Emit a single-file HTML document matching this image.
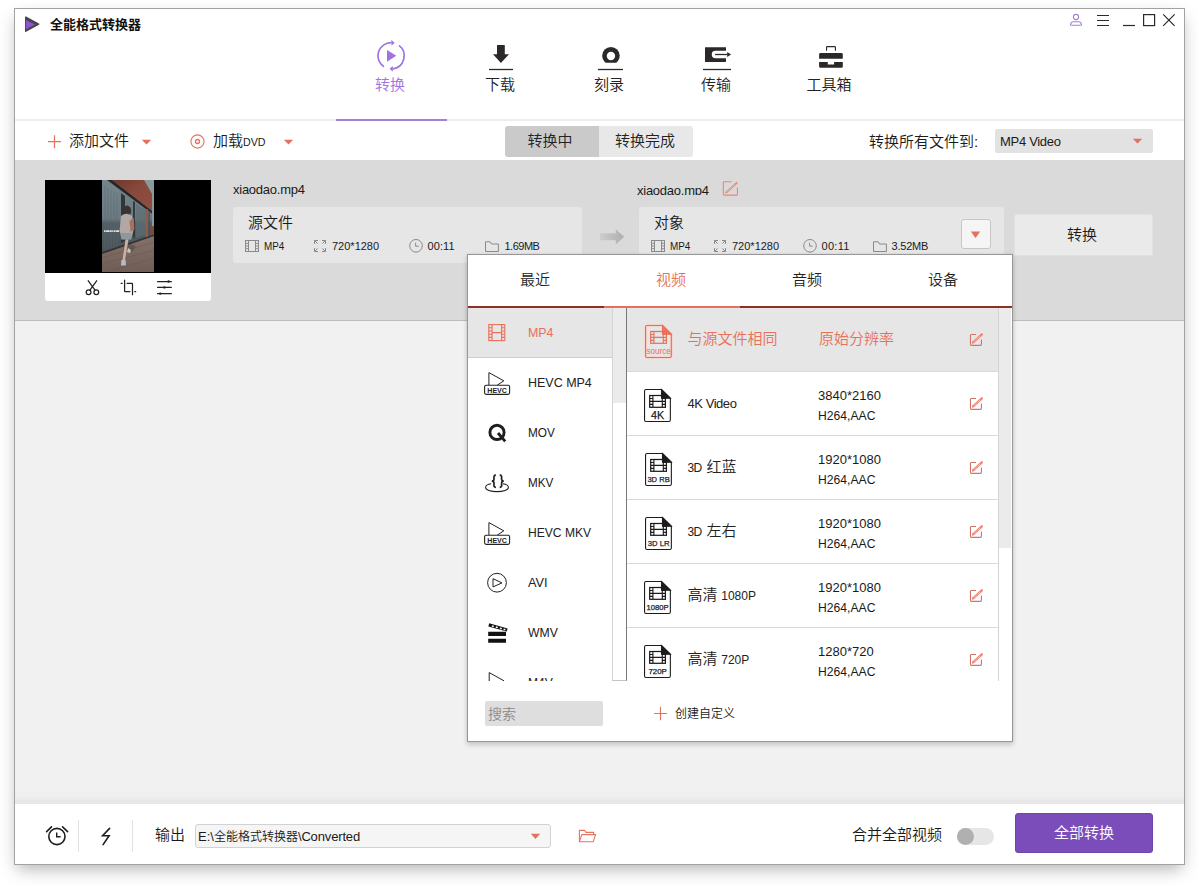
<!DOCTYPE html>
<html lang="zh-CN">
<head>
<meta charset="utf-8">
<title>全能格式转换器</title>
<style>
*{box-sizing:border-box;margin:0;padding:0}
html,body{width:1199px;height:888px;overflow:hidden;background:#fff}
body{font-family:"Liberation Sans","Noto Sans CJK SC",sans-serif;font-weight:350;color:#1a1a1a;position:relative;font-size:13px}
svg{position:absolute;overflow:visible}
#win{position:absolute;left:14px;top:8px;width:1171px;height:857px;background:#fff;border:1px solid #a2a2a2;box-shadow:0 7px 16px -3px rgba(0,0,0,.3)}
.t{position:absolute;white-space:nowrap;line-height:1}
#title{left:50px;top:18px;font-size:13px;font-weight:bold;color:#111}
.nav{position:absolute;top:77px;font-size:15px;color:#222;text-align:center;width:80px;line-height:15px}
#navline{position:absolute;left:15px;top:119px;width:1169px;height:2px;background:#eeecf3}
#navact{position:absolute;left:336px;top:119px;width:111px;height:2px;background:#a67fdc}
#filerow{position:absolute;left:15px;top:160px;width:1169px;height:161px;background:#dadada;border-bottom:1px solid #bcbcbc}
#empty{position:absolute;left:15px;top:321px;width:1169px;height:483px;background:#f1f1f1}
#bottom{position:absolute;left:15px;top:804px;width:1169px;height:60px;background:#fff}
.seg{position:absolute;top:126px;height:31px;font-size:15px;line-height:30px;text-align:center;color:#222}
.f15{font-size:15px}.f11{font-size:11px}.f13{font-size:13px}.f12{font-size:12px}.f14{font-size:14px}
.or{color:#e8705a}
.la{font-size:13px}.lb{font-size:12px}#rn2 .lb,#rn3 .lb{letter-spacing:-0.6px}
.box{position:absolute;background:#e6e6e6;border-radius:3px}
</style>
</head>
<body>
<div id="win"></div>
<svg style="left:22px;top:14px" width="20" height="20" viewBox="0 0 20 20"><path d="M4.2 2.6 L17 9.6 Q18 10.2 17 10.8 L4.2 17.8 Q3 18.4 3 17 L3 3.4 Q3 2 4.2 2.6Z" fill="#48464c"/><path d="M3.9 6 L13 10.4 L3.9 15.2Z" fill="#8b55cf"/></svg>
<div id="title" class="t">全能格式转换器</div>
<svg style="left:1068px;top:12px" width="16" height="16" viewBox="0 0 16 16" fill="none" stroke="#a67fdc" stroke-width="1.1"><circle cx="8" cy="5" r="2.6"/><path d="M3.2 13.3 Q2.3 13.3 2.5 12.3 Q3 9.8 5.2 9.8 H10.8 Q13 9.8 13.5 12.3 Q13.7 13.3 12.8 13.3Z"/></svg>
<svg style="left:1096px;top:12px" width="80" height="16" viewBox="0 0 80 16" fill="none" stroke="#2a2a2a" stroke-width="1.2"><path d="M1 3.5H13M1 8.5H13M1 13.5H13"/><path d="M27 13.5H39"/><rect x="47.6" y="2.6" width="11" height="11"/><path d="M67.2 2.4 L78.6 13.8M78.6 2.4 L67.2 13.8"/></svg>

<div id="navline"></div><div id="navact"></div>
<svg style="left:370px;top:35px" width="42" height="42" viewBox="0 0 42 42" fill="none" stroke="#9f74e2" stroke-width="1.7"><path d="M13.92 31.79 A13.1 13.1 0 0 1 21.5 7.71"/><path d="M28.93 10.34 A13.1 13.1 0 0 1 22.65 33.8"/><path d="M21.3 5 L24.7 7.8 L21.5 10.7Z" fill="#9f74e2" stroke="none"/><path d="M22.8 31.1 L19.6 33.8 L22.8 36.8Z" fill="#9f74e2" stroke="none"/><path d="M17 15.1 L26.3 20.8 L17 26.7Z" fill="#9f74e2" stroke="none"/></svg>
<div class="nav" style="left:350px;color:#9f74e2">转换</div>
<svg style="left:480px;top:35px" width="42" height="42" viewBox="0 0 42 42"><path d="M17.4 9.9 H24.4 Q24.8 9.9 24.8 10.3 V19.2 H29 L20.95 27.9 L13 19.2 H17 V10.3 Q17 9.9 17.4 9.9Z" fill="#2b2829"/><path d="M9 34.5H33" stroke="#2b2829" stroke-width="1.3"/></svg>
<div class="nav" style="left:460px">下载</div>
<svg style="left:588px;top:35px" width="42" height="42" viewBox="0 0 42 42"><clipPath id="cpb"><rect x="10" y="10" width="26" height="17.8"/></clipPath><circle cx="22.94" cy="20.8" r="8.8" fill="#2b2829" clip-path="url(#cpb)"/><circle cx="22.94" cy="20.95" r="4.2" fill="#fff"/><path d="M9.9 34.5H35" stroke="#2b2829" stroke-width="1.3"/></svg>
<div class="nav" style="left:569px">刻录</div>
<svg style="left:695px;top:35px" width="42" height="42" viewBox="0 0 42 42"><path d="M10.4 12.2 H30.6 Q31 12.2 31 12.6 V15.85 H20.4 A3.66 3.66 0 0 0 20.4 23.18 H31 V26.5 Q31 26.9 30.6 26.9 H10.4 Q10 26.9 10 26.5 V12.6 Q10 12.2 10.4 12.2Z" fill="#2b2829"/><path d="M20.1 19.5 H32.6" stroke="#2b2829" stroke-width="1.3"/><path d="M32.2 17.1 L36.1 19.5 L32.2 21.9Z" fill="#2b2829"/><path d="M8 34.5H36.05" stroke="#2b2829" stroke-width="1.3"/></svg>
<div class="nav" style="left:676px">传输</div>
<svg style="left:809px;top:35px" width="42" height="42" viewBox="0 0 42 42"><path d="M17.55 15.85 V12.4 Q17.55 11.65 18.3 11.65 H25.7 Q26.45 11.65 26.45 12.4 V15.85" fill="none" stroke="#2b2829" stroke-width="1.1"/><path d="M11.5 18.1 H32.4 Q33.8 18.1 33.8 19.5 V23.8 H10.1 V19.5 Q10.1 18.1 11.5 18.1Z" fill="#2b2829"/><path d="M10.1 27.06 H18.8 V29.56 H25.07 V27.06 H33.8 V31.4 Q33.8 32.8 32.4 32.8 H11.5 Q10.1 32.8 10.1 31.4Z" fill="#2b2829"/></svg>
<div class="nav" style="left:789px">工具箱</div>

<svg style="left:47px;top:134px" width="16" height="16" viewBox="0 0 16 16" stroke="#e8705a" stroke-width="1.2"><path d="M7.5 1.2V14.2M1 7.7H14"/></svg>
<div class="t f15" style="left:69px;top:133px">添加文件</div>
<svg style="left:141px;top:139px" width="11" height="6" viewBox="0 0 11 6"><path d="M0.8 0.8H10.2L5.5 5.4Z" fill="#e8705a"/></svg>
<svg style="left:189px;top:133px" width="17" height="17" viewBox="0 0 17 17" fill="none" stroke="#e8705a" stroke-width="1.1"><circle cx="8.5" cy="8.5" r="6.6"/><circle cx="8.5" cy="8.5" r="2" stroke-width="1.3"/></svg>
<div class="t f15" style="left:213px;top:133px">加载<span id="dvd" style="font-size:11.5px;display:inline-block;transform-origin:0 100%;transform:scaleX(0.93)">DVD</span></div>
<svg style="left:283px;top:139px" width="11" height="6" viewBox="0 0 11 6"><path d="M0.8 0.8H10.2L5.5 5.4Z" fill="#e8705a"/></svg>
<div class="seg" style="left:505px;width:94px;background:#cacaca;border-radius:3px 0 0 3px;padding-right:4px">转换中</div>
<div class="seg" style="left:599px;width:94px;background:#e8e8e8;border-radius:0 3px 3px 0;padding-right:2px">转换完成</div>
<div class="t f15" style="left:869px;top:134px">转换所有文件到:</div>
<div style="position:absolute;left:995px;top:129px;width:158px;height:24px;background:#e2e2e2;border-radius:2px"></div>
<div class="t f13" id="mp4v" style="letter-spacing:-0.3px;left:1000px;top:135px">MP4 Video</div>
<svg style="left:1132px;top:138px" width="11" height="6" viewBox="0 0 11 6"><path d="M0.8 0.8H10.2L5.5 5.4Z" fill="#e8705a"/></svg>

<div id="filerow"></div>
<div id="empty"></div>
<div style="position:absolute;left:45px;top:180px;width:166px;height:121px;background:#fff;border-radius:0 0 3px 3px"></div>
<div style="position:absolute;left:45px;top:180px;width:166px;height:93px;background:#000"></div>
<svg style="left:102px;top:180px" width="52" height="92" viewBox="0 0 52 92">
<defs><linearGradient id="gl" x1="0" y1="0" x2="0" y2="1"><stop offset="0" stop-color="#74858b"/><stop offset="0.42" stop-color="#6a7a80"/><stop offset="0.47" stop-color="#525e63"/><stop offset="1" stop-color="#434d52"/></linearGradient>
<linearGradient id="fl" x1="0" y1="0" x2="0" y2="1"><stop offset="0" stop-color="#85726a"/><stop offset="1" stop-color="#6f5d56"/></linearGradient>
<linearGradient id="br" x1="0" y1="0" x2="1" y2="1"><stop offset="0" stop-color="#6e392e"/><stop offset="0.5" stop-color="#8a4a3b"/><stop offset="1" stop-color="#8f4f40"/></linearGradient></defs>
<rect width="52" height="92" fill="url(#gl)"/>
<path d="M3 6V74M6 8V73M9 10V72M12 12V71M15 14V70" stroke="#5c6b71" stroke-width="0.8" opacity="0.6"/>
<path d="M19 13 L23 16 V61 L19 63Z" fill="#2f373a"/><path d="M31 21 L33 22 V57 L31 58Z" fill="#333b3e"/>
<path d="M34 24 L43 30 V55 L34 58Z" fill="#5d6d73" opacity="0.7"/>
<path d="M42 0 H52 V48 H50 V14Z" fill="#8a999d"/>
<path d="M10 0 H42 L50 14 V31Z" fill="url(#br)"/>
<path d="M5 0 H10 L50 31 V33.5 Z" fill="#2a2523"/>
<rect x="43.2" y="29" width="2.8" height="28" fill="#95594b"/>
<rect x="46.4" y="32" width="1.4" height="24" fill="#4a5357"/>
<rect x="48" y="46" width="4" height="10" fill="#714d44"/>
<path d="M0 73.5 L52 55.5 V92 H0Z" fill="url(#fl)"/>
<path d="M0 78 L52 62M0 84 L52 70M4 92 L52 78" stroke="#64534c" stroke-width="0.5" opacity="0.7"/>
<path d="M0 72 L52 54.5 V56 L0 74Z" fill="#35302f"/>
<path d="M22 62 L34 66 L30 72 L21 70Z" fill="#4e443f" opacity="0.5"/>
<ellipse cx="25" cy="31" rx="4.2" ry="5.4" fill="#3a3230"/>
<path d="M19 36 Q24.5 31.5 30 36 L31.5 50 L29 59 H19.5 L17.6 50Z" fill="#b1a7a4"/>
<path d="M19.3 53 H29.4 V59.6 H19.3Z" fill="#8e979c"/>
<path d="M27.5 41 L31.8 37.6 L32.4 49 L28.6 52Z" fill="#a8705d"/>
<path d="M23.5 59.5 L26.5 59.5 L23 80 L20.5 80Z" fill="#c6b2a6"/>
<path d="M26 68 L29 70 L28 73 L25 72Z" fill="#c9c4c0"/>
<path d="M19.4 80 H23.6 L24 85.6 H19Z" fill="#babbbd"/>
<path d="M2 51.2H17.6" stroke="#dfe2e3" stroke-width="1.7" stroke-dasharray="1.6 0.5 3 0.4 2.2 0.5 1.2 0.6"/>
</svg>
<svg style="left:75px;top:270px" width="110" height="35" viewBox="0 0 110 35" fill="none" stroke="#222" stroke-width="1.25"><path d="M12.9 10.3 L20.2 20.3M22 10.3 L14.7 20.3"/><circle cx="13.6" cy="22.2" r="2.4"/><circle cx="21.3" cy="22.2" r="2.4"/>
<path d="M49.6 10.2V20.9Q49.6 21.5 50.2 21.5H54.9M52.1 13.45H56.9Q57.5 13.45 57.5 14.05V24.7" stroke-linecap="round"/><path d="M46.2 13.45H47.1M59.8 21.5H60.7" stroke-linecap="round"/>
<path d="M82.1 11.5H96.8M82.1 17.4H96.8M82.1 23.6H96.8"/><circle cx="93.6" cy="11.5" r="1.2" fill="#222" stroke="none"/><circle cx="89.4" cy="17.4" r="1.2" fill="#222" stroke="none"/><circle cx="85.3" cy="23.6" r="1.2" fill="#222" stroke="none"/></svg>
<div class="t f13" id="fn1" style="letter-spacing:-0.25px;left:233px;top:183px">xiaodao.mp4</div>
<div class="box" style="left:233px;top:207px;width:349px;height:56px"></div>
<div class="t f15" style="left:248px;top:215px">源文件</div>
<svg class="ic" style="left:245px;top:240px" width="14" height="12" viewBox="0 0 14 12" fill="none" stroke="#8a8a8a" stroke-width="1"><rect x="0.5" y="0.5" width="13" height="11"/><path d="M3.5 0.5V11.5M10.5 0.5V11.5M0.5 3.3H3.5M0.5 6H3.5M0.5 8.7H3.5M10.5 3.3H13.5M10.5 6H13.5M10.5 8.7H13.5"/></svg>
<div class="t f11" id="s1" style="transform-origin:0 0;transform:scaleX(0.9);left:263.5px;top:241px">MP4</div>
<svg class="ic" style="left:314px;top:240px" width="12" height="12" viewBox="0 0 12 12" fill="none" stroke="#8a8a8a" stroke-width="1"><path d="M0.5 4V0.5H4M8 0.5H11.5V4M11.5 8V11.5H8M4 11.5H0.5V8M0.8 0.8L3.6 3.6M11.2 0.8L8.4 3.6M11.2 11.2L8.4 8.4M0.8 11.2L3.6 8.4"/></svg>
<div class="t f11" id="s2" style="left:332px;top:241px">720*1280</div>
<svg class="ic" style="left:409px;top:239px" width="14" height="14" viewBox="0 0 14 14" fill="none" stroke="#8a8a8a" stroke-width="1"><circle cx="7" cy="6.8" r="6.3"/><path d="M6.6 3.6V7.2H9.8"/></svg>
<div class="t f11" id="s3" style="letter-spacing:0.1px;left:427.5px;top:241px">00:11</div>
<svg class="ic" style="left:485px;top:241px" width="14" height="11" viewBox="0 0 14 11" fill="none" stroke="#8a8a8a" stroke-width="1"><path d="M0.5 10.5V0.8H5.2L6.6 3H13.4V10.5Z"/></svg>
<div class="t f11" id="s4" style="letter-spacing:-0.5px;left:504.5px;top:241px">1.69MB</div>
<svg style="left:598px;top:227px" width="28" height="20" viewBox="0 0 28 20"><defs><linearGradient id="ag" x1="0" y1="0" x2="1" y2="0"><stop offset="0" stop-color="#cecece"/><stop offset="1" stop-color="#aeaeae"/></linearGradient></defs><path d="M2 6.3H17.8V2.2L26.2 9.8L17.8 17.6V13.3H2Z" fill="url(#ag)"/></svg>
<div style="position:absolute;left:636px;top:180px;width:80px;height:15px;overflow:hidden"><div class="t f13" id="fn2" style="letter-spacing:-0.25px;left:1px;top:3.5px">xiaodao.mp4</div></div>
<svg style="left:722px;top:180px" width="17" height="17" viewBox="0 0 17 17" fill="none" stroke="#ee8674" stroke-width="1.1"><path d="M9.6 1.75H2.35Q1.35 1.75 1.35 2.75V14.15Q1.35 15.15 2.35 15.15H14.45Q15.45 15.15 15.45 14.15V7.4"/><path d="M4.2 12.4L14.6 2.9" stroke-width="2" stroke-linecap="round"/><path d="M4.6 12L13 4.4" stroke="#dcdcdc" stroke-width="0.6"/></svg>
<div class="box" style="left:639px;top:207px;width:365px;height:56px"></div>
<div class="t f15" style="left:654px;top:215px">对象</div>
<svg class="ic" style="left:651px;top:240px" width="14" height="12" viewBox="0 0 14 12" fill="none" stroke="#8a8a8a" stroke-width="1"><rect x="0.5" y="0.5" width="13" height="11"/><path d="M3.5 0.5V11.5M10.5 0.5V11.5M0.5 3.3H3.5M0.5 6H3.5M0.5 8.7H3.5M10.5 3.3H13.5M10.5 6H13.5M10.5 8.7H13.5"/></svg>
<div class="t f11" id="d1" style="transform-origin:0 0;transform:scaleX(0.9);left:669.5px;top:241px">MP4</div>
<svg class="ic" style="left:714px;top:240px" width="12" height="12" viewBox="0 0 12 12" fill="none" stroke="#8a8a8a" stroke-width="1"><path d="M0.5 4V0.5H4M8 0.5H11.5V4M11.5 8V11.5H8M4 11.5H0.5V8M0.8 0.8L3.6 3.6M11.2 0.8L8.4 3.6M11.2 11.2L8.4 8.4M0.8 11.2L3.6 8.4"/></svg>
<div class="t f11" id="d2" style="left:732px;top:241px">720*1280</div>
<svg class="ic" style="left:803px;top:239px" width="14" height="14" viewBox="0 0 14 14" fill="none" stroke="#8a8a8a" stroke-width="1"><circle cx="7" cy="6.8" r="6.3"/><path d="M6.6 3.6V7.2H9.8"/></svg>
<div class="t f11" id="d3" style="letter-spacing:0.3px;left:821.5px;top:241px">00:11</div>
<svg class="ic" style="left:873px;top:241px" width="14" height="11" viewBox="0 0 14 11" fill="none" stroke="#8a8a8a" stroke-width="1"><path d="M0.5 10.5V0.8H5.2L6.6 3H13.4V10.5Z"/></svg>
<div class="t f11" id="d4" style="letter-spacing:-0.2px;left:891.5px;top:241px">3.52MB</div>
<div style="position:absolute;left:961px;top:219px;width:30px;height:30px;background:#f5f5f5;border:1px solid #c6c6c6;border-radius:3px"></div>
<svg style="left:970px;top:231px" width="11" height="8" viewBox="0 0 11 8"><path d="M0.8 0.6H10.2L5.5 7Z" fill="#e8705a"/></svg>
<div style="position:absolute;left:1014px;top:214px;width:139px;height:42px;background:#eaeaea;border:1px solid #e1e1e1;border-radius:2px;font-size:15px;line-height:39px;text-align:center;padding-right:3px">转换</div>

<div id="pop" style="position:absolute;left:467px;top:254px;width:546px;height:488px;background:#fff;border:1px solid #979797;box-shadow:0 3px 5px rgba(0,0,0,.17),0 0 3px rgba(0,0,0,.08)"></div>
<div class="t f15" style="left:495px;top:272px;width:80px;text-align:center;color:#222">最近</div>
<div class="t f15" style="left:631px;top:272px;width:80px;text-align:center;color:#e8705a">视频</div>
<div class="t f15" style="left:767px;top:272px;width:80px;text-align:center;color:#222">音频</div>
<div class="t f15" style="left:903px;top:272px;width:80px;text-align:center;color:#222">设备</div>
<div style="position:absolute;left:468px;top:306px;width:544px;height:2px;background:#8e3024"></div>
<div style="position:absolute;left:604px;top:306px;width:136px;height:2px;background:#e2715d"></div>
<div id="ll" style="position:absolute;left:468px;top:308px;width:144px;height:373px;overflow:hidden;background:#fff">
<div style="position:absolute;left:0;top:0;width:144px;height:50px;background:#e6e6e6;border-bottom:1px solid #cfcfcf"></div>
<div class="t f13 ln" id="ln0" style="left:59.5px;top:18px;color:#e8705a;transform-origin:0 0;transform:scaleX(0.955)">MP4</div>
<div class="t f13 ln" id="ln1" style="left:59.5px;top:68px;color:#222;transform-origin:0 0;transform:scaleX(0.96)">HEVC MP4</div>
<div class="t f13 ln" id="ln2" style="left:59.5px;top:118px;color:#222;transform-origin:0 0;transform:scaleX(0.91)">MOV</div>
<div class="t f13 ln" id="ln3" style="left:59.5px;top:168px;color:#222;transform-origin:0 0;transform:scaleX(0.9)">MKV</div>
<div class="t f13 ln" id="ln4" style="left:59.5px;top:218px;color:#222;transform-origin:0 0;transform:scaleX(0.93)">HEVC MKV</div>
<div class="t f13 ln" id="ln5" style="left:59.5px;top:268px;color:#222;transform-origin:0 0;transform:scaleX(0.98)">AVI</div>
<div class="t f13 ln" id="ln6" style="left:59.5px;top:318px;color:#222;transform-origin:0 0;transform:scaleX(0.94)">WMV</div>
<div class="t f13 ln" id="ln7" style="left:59.5px;top:368px;color:#222;transform-origin:0 0;transform:scaleX(0.93)">M4V</div>
<svg style="left:20px;top:16px" width="18" height="18" viewBox="0 0 18 18" fill="none" stroke="#e8705a" stroke-width="1.1"><rect x="0.8" y="0.6" width="16" height="16"/><path d="M4 0.6V16.6M13.6 0.6V16.6M4 8.6H13.6M0.8 3.8H4M0.8 7H4M0.8 10.2H4M0.8 13.4H4M13.6 3.8H16.8M13.6 7H16.8M13.6 10.2H16.8M13.6 13.4H16.8"/></svg>
<svg style="left:15px;top:62px" width="28" height="26" viewBox="0 0 28 26" fill="none" stroke="#222" stroke-width="1"><path d="M5.9 15.2V2.6L20.8 10.8L14.2 15.2"/><rect x="1.6" y="15.2" width="25" height="9.2" rx="1.6" fill="#fff" stroke-width="1.1"/><text x="14.1" y="22.6" font-family="Liberation Sans,sans-serif" font-weight="bold" font-size="7.2" text-anchor="middle" fill="#222" stroke="none" textLength="19.6" lengthAdjust="spacingAndGlyphs">HEVC</text></svg>
<svg style="left:18px;top:114px" width="22" height="22" viewBox="0 0 22 22" fill="none" stroke="#1e1e1e"><circle cx="11" cy="10.4" r="7.1" stroke-width="2.9"/><path d="M12 11L19.2 19.4" stroke-width="2.8"/></svg>
<svg style="left:15px;top:164px" width="28" height="24" viewBox="0 0 28 24" fill="none" stroke="#222"><path d="M8.2 11.8 C3.4 12.4 2.6 14.2 2.6 15.5 C2.6 17.9 7.6 19.6 14 19.6 C20.4 19.6 25.4 17.9 25.4 15.5 C25.4 14.2 24.6 12.4 19.8 11.8" stroke-width="1.05"/><path d="M12.9 3.1 C10.4 3.1 11 5.2 11 7 C11 8.6 9.8 9.2 8.8 9.2 C9.8 9.2 11 9.8 11 11.4 C11 13.2 10.4 15.3 12.9 15.3M16.7 3.1 C19.2 3.1 18.6 5.2 18.6 7 C18.6 8.6 19.8 9.2 20.8 9.2 C19.8 9.2 18.6 9.8 18.6 11.4 C18.6 13.2 19.2 15.3 16.7 15.3" stroke-width="1.7"/></svg>
<svg style="left:15px;top:212px" width="28" height="26" viewBox="0 0 28 26" fill="none" stroke="#222" stroke-width="1"><path d="M5.9 15.2V2.6L20.8 10.8L14.2 15.2"/><rect x="1.6" y="15.2" width="25" height="9.2" rx="1.6" fill="#fff" stroke-width="1.1"/><text x="14.1" y="22.6" font-family="Liberation Sans,sans-serif" font-weight="bold" font-size="7.2" text-anchor="middle" fill="#222" stroke="none" textLength="19.6" lengthAdjust="spacingAndGlyphs">HEVC</text></svg>
<svg style="left:18px;top:264px" width="22" height="22" viewBox="0 0 22 22" fill="none" stroke="#222" stroke-width="1"><circle cx="11" cy="10.7" r="9.4"/><path d="M7 6.7V14.9L16 10.9Z"/></svg>
<svg style="left:18px;top:312px" width="24" height="24" viewBox="0 0 24 24"><path d="M2.2 11.7H20V15.9H2.2Z M2.2 18.8H20V22.7H2.2Z" fill="#111"/><path d="M3.2 3.2L21.6 8.4L20.8 11.6L2.4 6.4Z" fill="#111"/><path d="M6 5.2L8 5.8L7.6 7.2L5.6 6.6ZM10 6.3L12 6.9L11.6 8.3L9.6 7.7ZM14 7.4L16 8L15.6 9.4L13.6 8.8ZM17.8 8.5L19.6 9L19.2 10.4L17.4 9.9Z" fill="#fff"/></svg>
<svg style="left:15px;top:362px" width="28" height="26" viewBox="0 0 28 26" fill="none" stroke="#222" stroke-width="1"><path d="M6.2 15.2V2.6L21 10.8L14.2 15.2"/></svg>
</div>
<div style="position:absolute;left:612px;top:308px;width:15px;height:373px;background:#fff;border-left:1px solid #d4d4d4;border-bottom:1px solid #c4c4c4;border-right:1px solid #777"></div>
<div style="position:absolute;left:613px;top:308px;width:13px;height:95px;background:#ebebeb"></div>
<div id="rl" style="position:absolute;left:627px;top:308px;width:371px;height:373px;overflow:hidden;background:#fff">
<div style="position:absolute;left:0;top:0;width:371px;height:64px;background:#e6e6e6"></div>
<div style="position:absolute;left:0;top:63px;width:371px;height:1px;background:#d9d9d9"></div>
<svg style="left:16px;top:14px" width="31" height="37" viewBox="0 0 31 37" fill="none" stroke="#e8705a" stroke-width="1.1"><path d="M4 3.55H19.5L28.35 12.3V34Q28.35 35.45 26.9 35.45H4Q2.55 35.45 2.55 34V5Q2.55 3.55 4 3.55Z" stroke="#f9cfc6" stroke-width="2.5"/><path d="M4 3.55H19.5L28.35 12.3V34Q28.35 35.45 26.9 35.45H4Q2.55 35.45 2.55 34V5Q2.55 3.55 4 3.55Z"/><path d="M19.5 3.55L28.35 12.3H19.5Z" fill="#ef7761"/><rect x="7.7" y="9.5" width="15.7" height="11.8" stroke-width="1.2"/><path d="M10.9 9.5V21.3M20.3 9.5V21.3M10.9 15.4H20.3M7.7 12.45H10.9M7.7 15.4H10.9M7.7 18.35H10.9M20.3 12.45H23.4M20.3 15.4H23.4M20.3 18.35H23.4" stroke-width="1.1"/><text x="15.6" y="31.9" font-family="Liberation Sans,sans-serif" font-size="9" text-anchor="middle" fill="#e8705a" stroke="none" textLength="24.4" lengthAdjust="spacingAndGlyphs">source</text></svg>
<div class="t f15 rn" id="rn0" style="left:60.5px;top:23px;color:#e8705a;word-spacing:0.4px;">与源文件相同</div>
<div class="t f15" id="rr0" style="left:192px;top:23px;color:#e8705a">原始分辨率</div>
<svg style="left:341px;top:24px" width="17" height="17" viewBox="0 0 17 17" fill="none" stroke="#cf766a" stroke-width="1.1"><path d="M8.1 2.45H3.45Q2.45 2.45 2.45 3.45V12.35Q2.45 13.35 3.45 13.35H12.45Q13.45 13.35 13.45 12.35V7.5"/><path d="M5.4 10.2L13.9 2.3" stroke="#ee8674" stroke-width="2.3" stroke-linecap="round"/><path d="M3.9 11.5L4.5 9.2L6.3 11Z" fill="#e8705a" stroke="none"/><path d="M5.6 10L11.6 4.4" stroke="#fff" stroke-width="0.8" stroke-dasharray="0.8 0.7"/></svg>
<div style="position:absolute;left:0;top:127px;width:371px;height:1px;background:#d9d9d9"></div>
<svg style="left:15px;top:78px" width="31" height="37" viewBox="0 0 31 37" fill="none" stroke="#1c1c1c" stroke-width="1.1"><path d="M4 3.55H19.5L28.35 12.3V34Q28.35 35.45 26.9 35.45H4Q2.55 35.45 2.55 34V5Q2.55 3.55 4 3.55Z" fill="#fff"/><path d="M19.5 3.55L28.35 12.3H19.5Z" fill="#1c1c1c"/><rect x="7.7" y="9.5" width="15.7" height="11.8" stroke-width="1.25"/><path d="M10.9 9.5V21.3M20.3 9.5V21.3M10.9 15.4H20.3M7.7 12.45H10.9M7.7 15.4H10.9M7.7 18.35H10.9M20.3 12.45H23.4M20.3 15.4H23.4M20.3 18.35H23.4" stroke-width="1.15"/><text x="15.6" y="32.8" font-family="Liberation Sans,sans-serif" font-size="10.5" text-anchor="middle" fill="#1c1c1c" stroke="#1c1c1c" stroke-width="0.25" textLength="13.2" lengthAdjust="spacingAndGlyphs">4K</text></svg>
<div class="t f15 rn" id="rn1" style="left:60.5px;top:87px;color:#222;letter-spacing:-0.45px;"><span class="la">4K Video</span></div>
<div class="t f13 la2" id="ra1" style="left:191px;top:81px">3840*2160</div>
<div class="t f13 la2" id="rb1" style="left:191px;top:101px;transform-origin:0 0;transform:scaleX(0.935)">H264,AAC</div>
<svg style="left:341px;top:88px" width="17" height="17" viewBox="0 0 17 17" fill="none" stroke="#cf766a" stroke-width="1.1"><path d="M8.1 2.45H3.45Q2.45 2.45 2.45 3.45V12.35Q2.45 13.35 3.45 13.35H12.45Q13.45 13.35 13.45 12.35V7.5"/><path d="M5.4 10.2L13.9 2.3" stroke="#ee8674" stroke-width="2.3" stroke-linecap="round"/><path d="M3.9 11.5L4.5 9.2L6.3 11Z" fill="#e8705a" stroke="none"/><path d="M5.6 10L11.6 4.4" stroke="#fff" stroke-width="0.8" stroke-dasharray="0.8 0.7"/></svg>
<div style="position:absolute;left:0;top:191px;width:371px;height:1px;background:#d9d9d9"></div>
<svg style="left:16px;top:142px" width="31" height="37" viewBox="0 0 31 37" fill="none" stroke="#1c1c1c" stroke-width="1.1"><path d="M4 3.55H19.5L28.35 12.3V34Q28.35 35.45 26.9 35.45H4Q2.55 35.45 2.55 34V5Q2.55 3.55 4 3.55Z" fill="#fff"/><path d="M19.5 3.55L28.35 12.3H19.5Z" fill="#1c1c1c"/><rect x="7.7" y="9.5" width="15.7" height="11.8" stroke-width="1.25"/><path d="M10.9 9.5V21.3M20.3 9.5V21.3M10.9 15.4H20.3M7.7 12.45H10.9M7.7 15.4H10.9M7.7 18.35H10.9M20.3 12.45H23.4M20.3 15.4H23.4M20.3 18.35H23.4" stroke-width="1.15"/><text x="15.6" y="31.7" font-family="Liberation Sans,sans-serif" font-size="7.8" text-anchor="middle" fill="#1c1c1c" stroke="#1c1c1c" stroke-width="0.25" textLength="22.4" lengthAdjust="spacingAndGlyphs">3D RB</text></svg>
<div class="t f15 rn" id="rn2" style="left:60.5px;top:151px;color:#222;word-spacing:0.6px;"><span class="lb">3D</span> 红蓝</div>
<div class="t f13 la2" id="ra2" style="left:191px;top:145px">1920*1080</div>
<div class="t f13 la2" id="rb2" style="left:191px;top:165px;transform-origin:0 0;transform:scaleX(0.935)">H264,AAC</div>
<svg style="left:341px;top:152px" width="17" height="17" viewBox="0 0 17 17" fill="none" stroke="#cf766a" stroke-width="1.1"><path d="M8.1 2.45H3.45Q2.45 2.45 2.45 3.45V12.35Q2.45 13.35 3.45 13.35H12.45Q13.45 13.35 13.45 12.35V7.5"/><path d="M5.4 10.2L13.9 2.3" stroke="#ee8674" stroke-width="2.3" stroke-linecap="round"/><path d="M3.9 11.5L4.5 9.2L6.3 11Z" fill="#e8705a" stroke="none"/><path d="M5.6 10L11.6 4.4" stroke="#fff" stroke-width="0.8" stroke-dasharray="0.8 0.7"/></svg>
<div style="position:absolute;left:0;top:255px;width:371px;height:1px;background:#d9d9d9"></div>
<svg style="left:16px;top:206px" width="31" height="37" viewBox="0 0 31 37" fill="none" stroke="#1c1c1c" stroke-width="1.1"><path d="M4 3.55H19.5L28.35 12.3V34Q28.35 35.45 26.9 35.45H4Q2.55 35.45 2.55 34V5Q2.55 3.55 4 3.55Z" fill="#fff"/><path d="M19.5 3.55L28.35 12.3H19.5Z" fill="#1c1c1c"/><rect x="7.7" y="9.5" width="15.7" height="11.8" stroke-width="1.25"/><path d="M10.9 9.5V21.3M20.3 9.5V21.3M10.9 15.4H20.3M7.7 12.45H10.9M7.7 15.4H10.9M7.7 18.35H10.9M20.3 12.45H23.4M20.3 15.4H23.4M20.3 18.35H23.4" stroke-width="1.15"/><text x="15.6" y="31.7" font-family="Liberation Sans,sans-serif" font-size="7.8" text-anchor="middle" fill="#1c1c1c" stroke="#1c1c1c" stroke-width="0.25" textLength="21.8" lengthAdjust="spacingAndGlyphs">3D LR</text></svg>
<div class="t f15 rn" id="rn3" style="left:60.5px;top:215px;color:#222;word-spacing:0.6px;"><span class="lb">3D</span> 左右</div>
<div class="t f13 la2" id="ra3" style="left:191px;top:209px">1920*1080</div>
<div class="t f13 la2" id="rb3" style="left:191px;top:229px;transform-origin:0 0;transform:scaleX(0.935)">H264,AAC</div>
<svg style="left:341px;top:216px" width="17" height="17" viewBox="0 0 17 17" fill="none" stroke="#cf766a" stroke-width="1.1"><path d="M8.1 2.45H3.45Q2.45 2.45 2.45 3.45V12.35Q2.45 13.35 3.45 13.35H12.45Q13.45 13.35 13.45 12.35V7.5"/><path d="M5.4 10.2L13.9 2.3" stroke="#ee8674" stroke-width="2.3" stroke-linecap="round"/><path d="M3.9 11.5L4.5 9.2L6.3 11Z" fill="#e8705a" stroke="none"/><path d="M5.6 10L11.6 4.4" stroke="#fff" stroke-width="0.8" stroke-dasharray="0.8 0.7"/></svg>
<div style="position:absolute;left:0;top:319px;width:371px;height:1px;background:#d9d9d9"></div>
<svg style="left:15px;top:270px" width="31" height="37" viewBox="0 0 31 37" fill="none" stroke="#1c1c1c" stroke-width="1.1"><path d="M4 3.55H19.5L28.35 12.3V34Q28.35 35.45 26.9 35.45H4Q2.55 35.45 2.55 34V5Q2.55 3.55 4 3.55Z" fill="#fff"/><path d="M19.5 3.55L28.35 12.3H19.5Z" fill="#1c1c1c"/><rect x="7.7" y="9.5" width="15.7" height="11.8" stroke-width="1.25"/><path d="M10.9 9.5V21.3M20.3 9.5V21.3M10.9 15.4H20.3M7.7 12.45H10.9M7.7 15.4H10.9M7.7 18.35H10.9M20.3 12.45H23.4M20.3 15.4H23.4M20.3 18.35H23.4" stroke-width="1.15"/><text x="15.6" y="31.7" font-family="Liberation Sans,sans-serif" font-size="7.2" text-anchor="middle" fill="#1c1c1c" stroke="#1c1c1c" stroke-width="0.25" textLength="22" lengthAdjust="spacingAndGlyphs">1080P</text></svg>
<div class="t f15 rn" id="rn4" style="left:60.5px;top:279px;color:#222;word-spacing:0.4px;">高清<span class="lb"> 1080P</span></div>
<div class="t f13 la2" id="ra4" style="left:191px;top:273px">1920*1080</div>
<div class="t f13 la2" id="rb4" style="left:191px;top:293px;transform-origin:0 0;transform:scaleX(0.935)">H264,AAC</div>
<svg style="left:341px;top:280px" width="17" height="17" viewBox="0 0 17 17" fill="none" stroke="#cf766a" stroke-width="1.1"><path d="M8.1 2.45H3.45Q2.45 2.45 2.45 3.45V12.35Q2.45 13.35 3.45 13.35H12.45Q13.45 13.35 13.45 12.35V7.5"/><path d="M5.4 10.2L13.9 2.3" stroke="#ee8674" stroke-width="2.3" stroke-linecap="round"/><path d="M3.9 11.5L4.5 9.2L6.3 11Z" fill="#e8705a" stroke="none"/><path d="M5.6 10L11.6 4.4" stroke="#fff" stroke-width="0.8" stroke-dasharray="0.8 0.7"/></svg>
<div style="position:absolute;left:0;top:383px;width:371px;height:1px;background:#d9d9d9"></div>
<svg style="left:15px;top:334px" width="31" height="37" viewBox="0 0 31 37" fill="none" stroke="#1c1c1c" stroke-width="1.1"><path d="M4 3.55H19.5L28.35 12.3V34Q28.35 35.45 26.9 35.45H4Q2.55 35.45 2.55 34V5Q2.55 3.55 4 3.55Z" fill="#fff"/><path d="M19.5 3.55L28.35 12.3H19.5Z" fill="#1c1c1c"/><rect x="7.7" y="9.5" width="15.7" height="11.8" stroke-width="1.25"/><path d="M10.9 9.5V21.3M20.3 9.5V21.3M10.9 15.4H20.3M7.7 12.45H10.9M7.7 15.4H10.9M7.7 18.35H10.9M20.3 12.45H23.4M20.3 15.4H23.4M20.3 18.35H23.4" stroke-width="1.15"/><text x="15.6" y="31.7" font-family="Liberation Sans,sans-serif" font-size="7.2" text-anchor="middle" fill="#1c1c1c" stroke="#1c1c1c" stroke-width="0.25" textLength="18.4" lengthAdjust="spacingAndGlyphs">720P</text></svg>
<div class="t f15 rn" id="rn5" style="left:60.5px;top:343px;color:#222;word-spacing:0.4px;">高清<span class="lb"> 720P</span></div>
<div class="t f13 la2" id="ra5" style="left:191px;top:337px">1280*720</div>
<div class="t f13 la2" id="rb5" style="left:191px;top:357px;transform-origin:0 0;transform:scaleX(0.935)">H264,AAC</div>
<svg style="left:341px;top:344px" width="17" height="17" viewBox="0 0 17 17" fill="none" stroke="#cf766a" stroke-width="1.1"><path d="M8.1 2.45H3.45Q2.45 2.45 2.45 3.45V12.35Q2.45 13.35 3.45 13.35H12.45Q13.45 13.35 13.45 12.35V7.5"/><path d="M5.4 10.2L13.9 2.3" stroke="#ee8674" stroke-width="2.3" stroke-linecap="round"/><path d="M3.9 11.5L4.5 9.2L6.3 11Z" fill="#e8705a" stroke="none"/><path d="M5.6 10L11.6 4.4" stroke="#fff" stroke-width="0.8" stroke-dasharray="0.8 0.7"/></svg>
</div>
<div style="position:absolute;left:998px;top:308px;width:14px;height:373px;background:#fff;border-left:1px solid #d4d4d4"></div>
<div style="position:absolute;left:999px;top:308px;width:12px;height:240px;background:#ebebeb"></div>
<div style="position:absolute;left:485px;top:701px;width:118px;height:25px;background:#dedede;border-radius:2px"></div>
<div class="t f14" style="left:488px;top:707px;color:#8a8a8a">搜索</div>
<svg style="left:653px;top:706px" width="15" height="15" viewBox="0 0 15 15" stroke="#e8705a" stroke-width="1.1"><path d="M7.5 0.8V14.2M1 7.5H14"/></svg>
<div class="t f12" style="left:675px;top:708px">创建自定义</div>

<div style="position:absolute;left:15px;top:788px;width:1169px;height:16px;background:linear-gradient(#f1f1f1,#eeeeee 55%,#e8e8e8 80%,#e7e7e7)"></div>
<div id="bottom"></div>
<svg style="left:44px;top:823px" width="26" height="26" viewBox="0 0 26 26" fill="none" stroke="#1e1e1e" stroke-width="1.6" stroke-linecap="round"><circle cx="12.9" cy="13.5" r="8.1"/><path d="M2.6 8.6L7.5 3.9M18.6 3.9L23.6 8.6"/><path d="M12.7 9.6V13.7H16.6" stroke-width="1.4" stroke-linecap="butt"/></svg>
<div style="position:absolute;left:78px;top:820px;width:1px;height:32px;background:#e2e2e2"></div>
<svg style="left:98px;top:824px" width="16" height="24" viewBox="0 0 16 24" fill="none" stroke="#1e1e1e" stroke-width="1.6" stroke-linecap="round" stroke-linejoin="miter"><path d="M11.6 4.4L4.6 11.8H11.1L5.1 20.6"/></svg>
<div style="position:absolute;left:132px;top:820px;width:1px;height:32px;background:#e2e2e2"></div>
<div class="t f15" style="left:155px;top:827px">输出</div>
<div style="position:absolute;left:195px;top:824px;width:356px;height:24px;background:#f5f5f5;border:1px solid #d2d2d2;border-radius:3px"></div>
<div class="t" id="outp" style="left:198px;top:830px;font-size:12px;line-height:14px"><span class="la">E:\</span>全能格式转换器<span class="la" style="letter-spacing:-0.15px">\Converted</span></div>
<svg style="left:530px;top:833px" width="11" height="7" viewBox="0 0 11 7"><path d="M0.8 0.8H10.2L5.5 5.9Z" fill="#e8705a"/></svg>
<svg style="left:577px;top:828px" width="20" height="16" viewBox="0 0 20 16" fill="none" stroke="#e27560" stroke-width="1.1" stroke-linejoin="round"><path d="M2.4 13.8V2.4H7.6L9 4.4H16.6V6.6"/><path d="M2.4 13.8L4.8 6.6H18.6L16.2 13.8Z"/></svg>
<div class="t f15" style="left:852px;top:827px">合并全部视频</div>
<div style="position:absolute;left:957px;top:828px;width:37px;height:17px;border-radius:8.5px;background:#e6e6e6"></div>
<div style="position:absolute;left:957px;top:828px;width:17px;height:17px;border-radius:8.5px;background:#b0b0b0"></div>
<div style="position:absolute;left:1015px;top:813px;width:138px;height:40px;background:#7b4dbb;border:1px solid #6f46aa;border-radius:3px;color:#fff;font-size:15px;line-height:37px;text-align:center">全部转换</div>

</body>
</html>
